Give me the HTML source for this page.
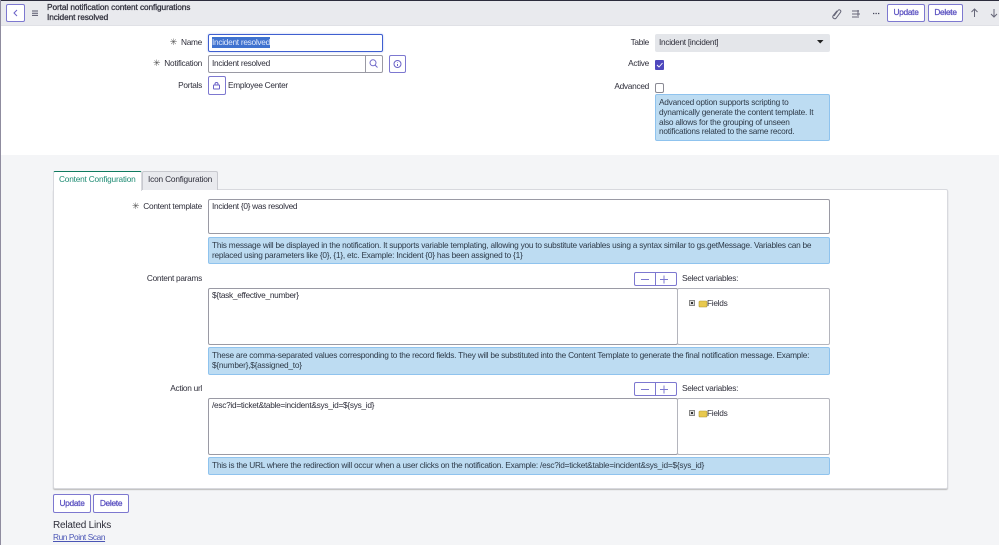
<!DOCTYPE html>
<html><head><meta charset="utf-8"><style>
html,body{margin:0;padding:0;width:999px;height:545px;overflow:hidden;background:#fff}
body{font-family:"Liberation Sans",sans-serif;font-size:8.3px;letter-spacing:-.28px;color:#2e2e3a}
#w{position:absolute;left:0;top:0;width:999px;height:545px;overflow:hidden;filter:blur(.3px)}
.a{position:absolute;box-sizing:border-box}
.t{position:absolute;white-space:nowrap;line-height:11px}
.r{text-align:right}
.s{color:#555;margin-right:2px;font-size:9px}
.b{position:absolute;box-sizing:border-box;border:1px solid #7d78d0;border-radius:2px;background:#fff;color:#5a50c0;text-align:center;-webkit-text-stroke:.25px #5a50c0;line-height:15px}
.h{position:absolute;box-sizing:border-box;background:#bddcf2;border:1px solid #8fc3ee;border-radius:2px;color:#2e3a48;padding:3px 3px;line-height:9.8px;white-space:nowrap;letter-spacing:-.24px}
.i{position:absolute;box-sizing:border-box;background:#fff;border:1px solid #9a9aa4;border-radius:2px}
svg{position:absolute;overflow:visible}
</style></head><body><div id="w">
<div class="a" style="left:0;top:155px;width:999px;height:390px;background:#f4f5f7"></div>
<div class="a" style="left:0;top:1px;width:999px;height:25px;background:#e9eaee;border-bottom:1px solid #e0e1e6"></div>
<div class="a" style="left:0;top:0;width:999px;height:1px;background:#2c2c3c"></div>
<div class="a" style="left:0;top:0;width:1px;height:545px;background:#8f8c9f"></div>

<div class="b" style="left:6px;top:4px;width:19px;height:18px"></div>
<svg style="left:0;top:0" width="40" height="26" fill="none"><path d="M17 10l-3 3 3 3" stroke="#6a62c8" stroke-width="1"/><path d="M32 11h6M32 13.2h6M32 15.4h6" stroke="#55556a" stroke-width="1"/></svg>
<div class="t" style="left:47px;top:2px;letter-spacing:-.09px;-webkit-text-stroke:.25px #2e2e3a">Portal notification content configurations</div>
<div class="t" style="left:47px;top:12px;letter-spacing:-.09px;-webkit-text-stroke:.25px #2e2e3a">Incident resolved</div>

<svg style="left:830px;top:6px" width="60" height="14" fill="none"><path d="M4 10l4-5.500a1.500 1.500 0 0 1 2.500 1.800l-4.500 6a2 2 0 0 1-3-2.500l4-5" stroke="#666678" stroke-width="1"/><path d="M22 5h7M22 8h8M22 11h5M28 4v8" stroke="#666678" stroke-width="1"/><path d="M43 7.500h1.300M45.500 7.500h1.300M48 7.500h1.300" stroke="#45455a" stroke-width="1.300"/></svg>
<div class="b" style="left:887px;top:4px;width:38px;height:18px">Update</div>
<div class="b" style="left:928px;top:4px;width:35px;height:18px">Delete</div>
<svg style="left:968px;top:6px" width="31" height="14" fill="none"><path d="M6.500 11V3M3.500 6l3-3 3 3M26 3v8M23 8l3 3 3-3" stroke="#666678" stroke-width="1"/></svg>

<div class="t r" style="left:120px;top:37px;width:82px"><span class="s">✳</span> Name</div>
<div class="a" style="left:208px;top:34px;width:175px;height:18px;border:1.500px solid #3f5fd0;border-radius:2px;box-shadow:0 0 2px #b8c8f0;background:#fff"></div>
<div class="t" style="left:212px;top:37px;background:#3f72cf;color:#dfe8fb;height:11px">Incident resolved</div>
<div class="t r" style="left:120px;top:58px;width:82px"><span class="s">✳</span> Notification</div>
<div class="i" style="left:208px;top:55px;width:175px;height:18px"></div>
<div class="a" style="left:365px;top:55px;width:1px;height:18px;background:#9a9aa4"></div>
<div class="t" style="left:212px;top:58px">Incident resolved</div>
<svg style="left:368px;top:58px" width="12" height="12" fill="none"><circle cx="5" cy="4.800" r="3" stroke="#7068c8"/><path d="M7 7l2.500 2.500" stroke="#7068c8"/></svg>
<div class="b" style="left:389px;top:55px;width:17px;height:18px"></div>
<svg style="left:393px;top:59px" width="10" height="10" fill="none"><circle cx="4.500" cy="5" r="3.500" stroke="#6a62c8"/><path d="M4.500 3.500v.500M4.500 5v2" stroke="#6a62c8"/></svg>
<div class="t r" style="left:140px;top:80px;width:62px">Portals</div>
<div class="b" style="left:208px;top:76px;width:18px;height:19px"></div>
<svg style="left:212px;top:81px" width="10" height="10" fill="none"><rect x="1.500" y="4" width="6" height="4" rx=".5" stroke="#6a62c8"/><path d="M3 4V3a1.500 1.500 0 0 1 3 0v1" stroke="#6a62c8"/></svg>
<div class="t" style="left:228px;top:80px">Employee Center</div>

<div class="t r" style="left:590px;top:37px;width:59px">Table</div>
<div class="a" style="left:655px;top:34px;width:175px;height:18px;background:#e4e6ea;border-radius:2px"></div>
<div class="t" style="left:659px;top:37px">Incident [incident]</div>
<svg style="left:817px;top:40px" width="8" height="5"><path d="M0 0h6.500L3.200 3.500z" fill="#222"/></svg>
<div class="t r" style="left:590px;top:58px;width:59px">Active</div>
<div class="a" style="left:655px;top:60px;width:9px;height:10px;background:#4f48bd;border-radius:1px"></div>
<svg style="left:655px;top:60px" width="9" height="10" fill="none"><path d="M2 5l2 2 3.500-4" stroke="#fff" stroke-width=".9"/></svg>
<div class="t r" style="left:590px;top:81px;width:59px">Advanced</div>
<div class="i" style="left:655px;top:83px;width:9px;height:10px;border-color:#8a8a94"></div>
<div class="h" style="left:655px;top:94px;width:175px;height:47px">Advanced option supports scripting to<br>dynamically generate the content template. It<br>also allows for the grouping of unseen<br>notifications related to the same record.</div>

<div class="a" style="left:53px;top:189px;width:895px;height:300px;background:#fff;border:1px solid #d8d9de;border-radius:2px;box-shadow:0 1px 1px #bbb"></div>
<div class="a" style="left:142px;top:171px;width:76px;height:19px;background:#e9eaee;border:1px solid #c8c9cf;border-bottom:0;border-radius:2px 2px 0 0"></div>
<div class="a" style="left:53px;top:171px;width:89px;height:20px;background:#fff;border:1px solid #d8d9de;border-top:1.500px solid #0f7a5f;border-bottom:0;border-radius:2px 2px 0 0"></div>
<div class="t" style="left:59px;top:174px;color:#1f8c74;letter-spacing:-.2px">Content Configuration</div>
<div class="t" style="left:148px;top:174px;letter-spacing:-.18px">Icon Configuration</div>

<div class="t r" style="left:110px;top:201px;width:92px"><span class="s">✳</span> Content template</div>
<div class="i" style="left:208px;top:199px;width:622px;height:35px"></div>
<div class="t" style="left:212px;top:201px">Incident {0} was resolved</div>
<div class="h" style="left:208px;top:237px;width:622px;height:27px">This message will be displayed in the notification. It supports variable templating, allowing you to substitute variables using a syntax similar to gs.getMessage. Variables can be<br>replaced using parameters like {0}, {1}, etc. Example: Incident {0} has been assigned to {1}</div>

<div class="t r" style="left:120px;top:273px;width:82px">Content params</div>
<div class="b" style="left:634px;top:272px;width:43px;height:14px"></div>
<div class="a" style="left:655px;top:272px;width:1px;height:14px;background:#7d78d0"></div>
<svg style="left:634px;top:272px" width="43" height="14" fill="none"><path d="M7 7.500h8M26 7.500h8M30 3.500v8" stroke="#7d78d0"/></svg>
<div class="t" style="left:682px;top:273px">Select variables:</div>
<div class="i" style="left:208px;top:288px;width:470px;height:57px"></div>
<div class="i" style="left:677px;top:288px;width:153px;height:57px;border-color:#b4b5bd"></div>
<div class="t" style="left:212px;top:290px">${task_effective_number}</div>
<svg style="left:689px;top:299px" width="20" height="9"><rect x=".5" y="1.500" width="5" height="5" fill="#ddd" stroke="#888"/><rect x="2" y="3" width="2" height="2" fill="#333"/><rect x="10" y="2" width="8" height="6" rx="1" fill="#e8c94f" stroke="#b09530" stroke-width=".6"/></svg>
<div class="t" style="left:707px;top:298px">Fields</div>
<div class="h" style="left:208px;top:347px;width:622px;height:28px">These are comma-separated values corresponding to the record fields. They will be substituted into the Content Template to generate the final notification message. Example:<br>${number},${assigned_to}</div>

<div class="t r" style="left:120px;top:383px;width:82px">Action url</div>
<div class="b" style="left:634px;top:382px;width:43px;height:14px"></div>
<div class="a" style="left:655px;top:382px;width:1px;height:14px;background:#7d78d0"></div>
<svg style="left:634px;top:382px" width="43" height="14" fill="none"><path d="M7 7.500h8M26 7.500h8M30 3.500v8" stroke="#7d78d0"/></svg>
<div class="t" style="left:682px;top:383px">Select variables:</div>
<div class="i" style="left:208px;top:398px;width:470px;height:57px"></div>
<div class="i" style="left:677px;top:398px;width:153px;height:57px;border-color:#b4b5bd"></div>
<div class="t" style="left:212px;top:400px">/esc?id=ticket&amp;table=incident&amp;sys_id=${sys_id}</div>
<svg style="left:689px;top:409px" width="20" height="9"><rect x=".5" y="1.500" width="5" height="5" fill="#ddd" stroke="#888"/><rect x="2" y="3" width="2" height="2" fill="#333"/><rect x="10" y="2" width="8" height="6" rx="1" fill="#e8c94f" stroke="#b09530" stroke-width=".6"/></svg>
<div class="t" style="left:707px;top:408px">Fields</div>
<div class="h" style="left:208px;top:457px;width:622px;height:18px">This is the URL where the redirection will occur when a user clicks on the notification. Example: /esc?id=ticket&amp;table=incident&amp;sys_id=${sys_id}</div>

<div class="b" style="left:53px;top:494px;width:38px;height:19px;line-height:17px">Update</div>
<div class="b" style="left:93px;top:494px;width:36px;height:19px;line-height:17px">Delete</div>
<div class="t" style="left:53px;top:520px;font-size:10px;letter-spacing:-.2px">Related Links</div>
<div class="t" style="left:53px;top:532px;color:#4a55b5;text-decoration:underline;letter-spacing:-.4px">Run Point Scan</div>
</div></body></html>
